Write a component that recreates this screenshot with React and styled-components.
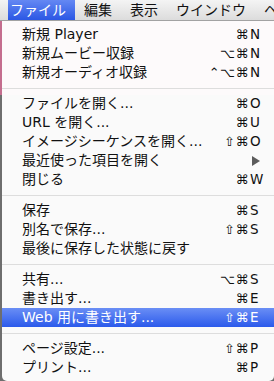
import React from "react";
import styled, { createGlobalStyle } from "styled-components";

const GlobalStyle = createGlobalStyle`
  html, body {
    margin: 0;
    padding: 0;
  }
  body {
    width: 274px;
    height: 381px;
    overflow: hidden;
    background: linear-gradient(
      to bottom,
      #d8d8d8 0px,
      #d8d8d8 21px,
      #c46d8e 21px,
      #c46d8e 95px,
      #6e6e6e 95px
    );
    font-family: "DejaVu Sans", "Noto Sans CJK JP", sans-serif;
    -webkit-font-smoothing: antialiased;
  }
`;

const Screen = styled.div`
  display: flex;
  flex-direction: column;
  width: 274px;
  height: 381px;
`;

const MenuBar = styled.div`
  display: flex;
  height: 20px;
  padding-left: 8px;
  border-bottom: 1px solid #a2a2a2;
  background: linear-gradient(to bottom, #f4f4f4, #dcdcdc);
  font-size: 14px;
  line-height: 21px;
  white-space: nowrap;
  overflow: hidden;
`;

const Title = styled.div`
  flex-shrink: 0;
  padding: 0 9px;
  color: ${p => (p.$active ? "#fff" : "#111")};
  background: ${p =>
    p.$active ? "linear-gradient(to bottom, #6488f3, #2b57e4)" : "none"};
  &:first-child {
    padding-left: 2px;
  }
`;

const Panel = styled.div`
  flex: 1;
  margin-left: 2px;
  padding: 4px 0;
  background: rgba(255, 255, 255, 0.97);
  border-radius: 0 0 5px 5px;
`;

const Item = styled.div`
  display: grid;
  grid-template-columns: 1fr auto 16px;
  align-items: center;
  height: 19px;
  padding: 0 9px 0 20px;
  font-size: 14px;
  line-height: 19px;
  white-space: nowrap;
  color: ${p => (p.$active ? "#fff" : "#111")};
  background: ${p =>
    p.$active ? "linear-gradient(to bottom, #6a8ef5, #2b5aeb)" : "transparent"};
`;

const Mods = styled.span`
  font-family: "DejaVu Sans", sans-serif;
  font-size: 13px;
  text-align: right;
  letter-spacing: 0.5px;
`;

const Key = styled.span`
  font-family: "DejaVu Sans", sans-serif;
  font-size: 13.5px;
  padding-left: 1px;
`;

const Arrow = styled.span`
  width: 0;
  height: 0;
  margin-left: 3px;
  border-left: 8px solid #5c5c5c;
  border-top: 5px solid transparent;
  border-bottom: 5px solid transparent;
`;

const Separator = styled.div`
  display: flex;
  align-items: center;
  height: 12px;
  &::after {
    content: "";
    flex: 1;
    height: 1px;
    background: #dddddd;
  }
`;

const titles = ["ファイル", "編集", "表示", "ウインドウ", "ヘルプ"];

const items = [
  { label: "新規 Player", mods: "⌘", key: "N" },
  { label: "新規ムービー収録", mods: "⌥⌘", key: "N" },
  { label: "新規オーディオ収録", mods: "⌃⌥⌘", key: "N" },
  null,
  { label: "ファイルを開く...", mods: "⌘", key: "O" },
  { label: "URL を開く...", mods: "⌘", key: "U" },
  { label: "イメージシーケンスを開く...", mods: "⇧⌘", key: "O" },
  { label: "最近使った項目を開く", submenu: true },
  { label: "閉じる", mods: "⌘", key: "W" },
  null,
  { label: "保存", mods: "⌘", key: "S" },
  { label: "別名で保存...", mods: "⇧⌘", key: "S" },
  { label: "最後に保存した状態に戻す" },
  null,
  { label: "共有...", mods: "⌥⌘", key: "S" },
  { label: "書き出す...", mods: "⌘", key: "E" },
  { label: "Web 用に書き出す...", mods: "⇧⌘", key: "E", active: true },
  null,
  { label: "ページ設定...", mods: "⇧⌘", key: "P" },
  { label: "プリント...", mods: "⌘", key: "P" },
];

export default function App() {
  return (
    <Screen>
      <GlobalStyle />
      <MenuBar>
        {titles.map((t, i) => (
          <Title key={t} $active={i === 0}>
            {t}
          </Title>
        ))}
      </MenuBar>
      <Panel>
        {items.map((item, i) =>
          item ? (
            <Item key={i} $active={item.active}>
              <span>{item.label}</span>
              <Mods>{item.mods}</Mods>
              {item.submenu ? <Arrow /> : <Key>{item.key}</Key>}
            </Item>
          ) : (
            <Separator key={i} />
          ),
        )}
      </Panel>
    </Screen>
  );
}
